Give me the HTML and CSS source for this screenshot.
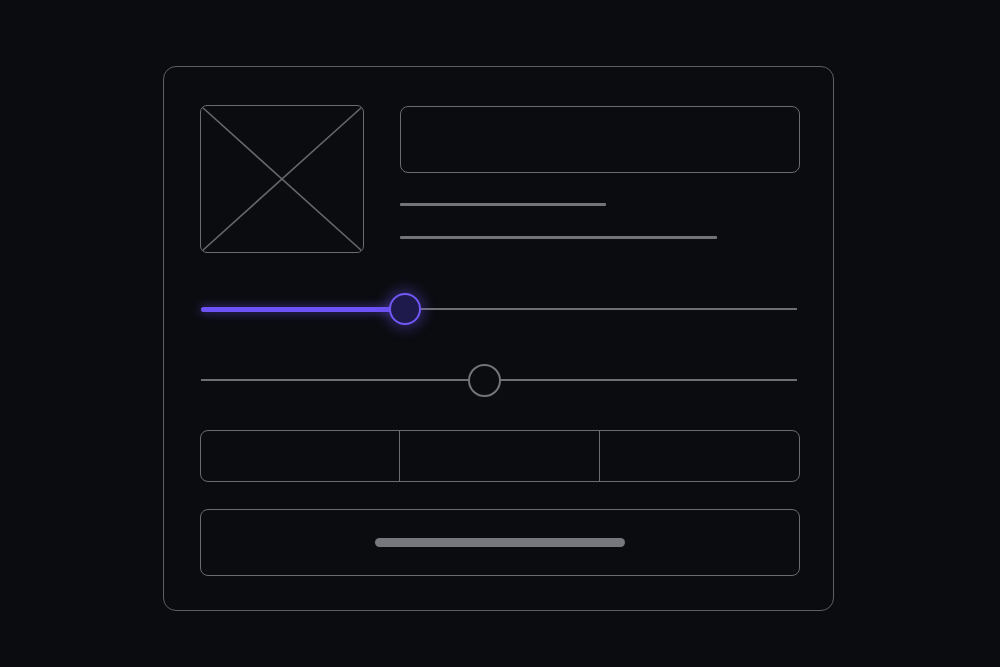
FILE: index.html
```html
<!DOCTYPE html>
<html lang="en">
<head>
<meta charset="utf-8">
<title>Wireframe</title>
<link rel="stylesheet" href="styles.css">
</head>
<body>
<div class="card">
  <div class="top-row">
    <div class="image-ph">
      <svg class="cross" viewBox="0 0 160 144" preserveAspectRatio="none">
        <line x1="1" y1="1" x2="159" y2="143"/>
        <line x1="159" y1="1" x2="1" y2="143"/>
      </svg>
    </div>
    <div class="text-col">
      <div class="title-box"></div>
      <div class="text-line line-a"></div>
      <div class="text-line line-b"></div>
    </div>
  </div>

  <div class="slider slider-active">
    <div class="track">
      <div class="rail"></div>
      <div class="fill"></div>
      <div class="thumb thumb-active"></div>
    </div>
  </div>

  <div class="slider slider-idle">
    <div class="track">
      <div class="rail"></div>
      <div class="thumb thumb-idle"></div>
    </div>
  </div>

  <div class="segmented">
    <div class="seg"></div>
    <div class="seg"></div>
    <div class="seg"></div>
  </div>

  <div class="button">
    <div class="pill"></div>
  </div>
</div>
</body>
</html>
```

FILE: styles.css
```css
html, body {
  margin: 0;
  padding: 0;
  background: #0b0c10;
  width: 1000px;
  height: 667px;
  overflow: hidden;
  font-family: "Liberation Sans", Arial, sans-serif;
}

.card {
  box-sizing: border-box;
  margin: 66px 0 0 163px;
  width: 671px;
  height: 545px;
  border: 1.75px solid #5e5f65;
  border-radius: 13px;
  padding: 38px 33.5px 0 35.5px;
  display: flex;
  flex-direction: column;
}

.top-row {
  display: flex;
  gap: 36px;
  height: 148px;
}

.image-ph {
  box-sizing: border-box;
  width: 164px;
  height: 148px;
  border: 1.75px solid #6b6c71;
  border-radius: 7px;
  overflow: hidden;
  flex: none;
}

.cross {
  display: block;
  width: 100%;
  height: 100%;
}

.cross line {
  stroke: #66676c;
  stroke-width: 1.6;
  vector-effect: non-scaling-stroke;
}

.text-col {
  flex: 1;
  display: flex;
  flex-direction: column;
}

.title-box {
  box-sizing: border-box;
  height: 67px;
  margin-top: 1px;
  border: 1.75px solid #6b6c71;
  border-radius: 8px;
}

.text-line {
  height: 2.5px;
  background: #737479;
  border-radius: 1px;
}

.line-a {
  width: 206px;
  margin-top: 30px;
}

.line-b {
  width: 317px;
  margin-top: 30.5px;
}

.slider {
  height: 32px;
  display: flex;
  align-items: center;
  padding: 0 3px 0 1px;
}

.slider-active {
  margin-top: 40px;
}

.slider-idle {
  margin-top: 39px;
}

.track {
  position: relative;
  flex: 1;
  height: 32px;
}

.rail {
  position: absolute;
  left: 0;
  right: 0;
  top: 15px;
  height: 2px;
  background: #6e6f74;
}

.fill {
  position: absolute;
  left: 0;
  top: 14px;
  width: 200px;
  height: 4.5px;
  border-radius: 3px;
  background: #6d52f5;
  box-shadow: 0 0 10px 1px rgba(109, 82, 245, 0.45);
}

.thumb {
  position: absolute;
  box-sizing: border-box;
  width: 32px;
  height: 32px;
  top: 0;
  border-radius: 50%;
}

.thumb-active {
  left: 188px;
  background: #1f1a4c;
  border: 2px solid #7258f5;
  box-shadow: 0 0 14px 3px rgba(109, 82, 245, 0.4);
}

.thumb-idle {
  left: 267px;
  top: -0.5px;
  width: 33px;
  height: 33px;
  background: #0b0c10;
  border: 2px solid #737479;
}

.segmented {
  box-sizing: border-box;
  margin-top: 34px;
  height: 52px;
  display: flex;
  border: 1.75px solid #6b6c71;
  border-radius: 8px;
}

.seg {
  flex: 1;
}

.seg + .seg {
  border-left: 1.75px solid #6b6c71;
}

.button {
  box-sizing: border-box;
  margin-top: 27px;
  height: 67px;
  border: 1.75px solid #6b6c71;
  border-radius: 8px;
  display: flex;
  align-items: center;
  justify-content: center;
}

.pill {
  width: 250px;
  height: 9px;
  border-radius: 5px;
  background: #77787d;
}
```
